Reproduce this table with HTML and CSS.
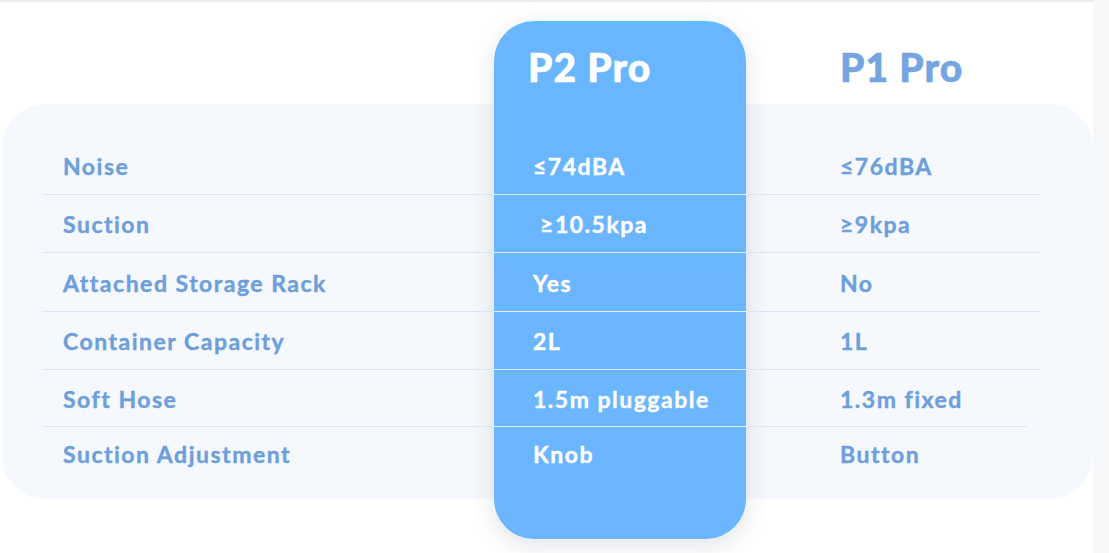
FILE: index.html
```html
<!DOCTYPE html>
<html lang="en">
<head>
<meta charset="utf-8">
<title>P2 Pro vs P1 Pro</title>
<link rel="stylesheet" href="styles.css">
</head>
<body>
<div class="page">
  <div class="compare">
    <div class="panel"></div>
    <div class="card"></div>

    <div class="head head-p2">P2 Pro</div>
    <div class="head head-p1">P1 Pro</div>

    <div class="label r1">Noise</div>
    <div class="val p2 r1">≤74dBA</div>
    <div class="val p1 r1">≤76dBA</div>

    <div class="label r2">Suction</div>
    <div class="val p2 r2">&nbsp;≥10.5kpa</div>
    <div class="val p1 r2">≥9kpa</div>

    <div class="label r3">Attached Storage Rack</div>
    <div class="val p2 r3">Yes</div>
    <div class="val p1 r3">No</div>

    <div class="label r4">Container Capacity</div>
    <div class="val p2 r4">2L</div>
    <div class="val p1 r4">1L</div>

    <div class="label r5">Soft Hose</div>
    <div class="val p2 r5">1.5m pluggable</div>
    <div class="val p1 r5 short">1.3m fixed</div>

    <div class="label r6 last">Suction Adjustment</div>
    <div class="val p2 r6 last">Knob</div>
    <div class="val p1 r6 last">Button</div>
  </div>
</div>
</body>
</html>
```
FILE: styles.css
```css
html, body {
  margin: 0;
  padding: 0;
}
body {
  background: #f6f7f9;
  font-family: "Lato", "Liberation Sans", sans-serif;
  font-weight: 700;
  height: 553px;
  overflow: hidden;
}
.page {
  width: 1093px;
  height: 551px;
  background: #ffffff;
  border-top: 2px solid #ececec;
}
.compare {
  display: grid;
  grid-template-columns: 42px 452px 252px 294px 53px;
  grid-template-rows: 83px 33px 58px 58px 59px 58px 57px 52px 20px 40px;
  padding-top: 19px;
}
.panel {
  grid-column: 1 / 6;
  grid-row: 2 / 10;
  background: #f5f8fc;
  border-radius: 44px;
  margin-left: 2px;
  z-index: 0;
}
.card {
  grid-column: 3;
  grid-row: 1 / 11;
  background: linear-gradient(180deg, #4ec8f6 0, #6ab6fe 3px, #6bb6fe 100%);
  border-radius: 40px;
  box-shadow: 0 6px 22px rgba(60, 80, 110, 0.16);
  z-index: 1;
}
.head {
  grid-row: 1;
  z-index: 2;
  font-size: 39px;
  font-weight: 900;
  letter-spacing: 1px;
  -webkit-text-stroke: 0.6px currentColor;
  display: flex;
  align-items: center;
  padding-top: 8px;
}
.head-p2 {
  grid-column: 3;
  color: #ffffff;
  padding-left: 34px;
}
.head-p1 {
  grid-column: 4;
  color: #74a5e0;
  padding-left: 94px;
}
.label, .val {
  z-index: 2;
  font-size: 23px;
  letter-spacing: 1.5px;
  -webkit-text-stroke: 0.4px currentColor;
  display: flex;
  align-items: center;
  border-bottom: 1px solid #d8e6f6;
  box-sizing: border-box;
  padding-top: 1px;
}
.label {
  grid-column: 2;
  color: #6d9fdc;
  padding-left: 21px;
}
.val.p2 {
  grid-column: 3;
  color: #ffffff;
  padding-left: 39px;
  border-bottom-color: rgba(255, 255, 255, 0.75);
}
.val.p1 {
  grid-column: 4;
  color: #6d9fdc;
  padding-left: 94px;
}
.val.p1.short {
  margin-right: 13px;
}
.last,
.val.p2.last {
  border-bottom: none;
}
.r1 { grid-row: 3; }
.r2 { grid-row: 4; }
.r3 { grid-row: 5; }
.r4 { grid-row: 6; }
.r5 { grid-row: 7; }
.r6 { grid-row: 8; }
```
